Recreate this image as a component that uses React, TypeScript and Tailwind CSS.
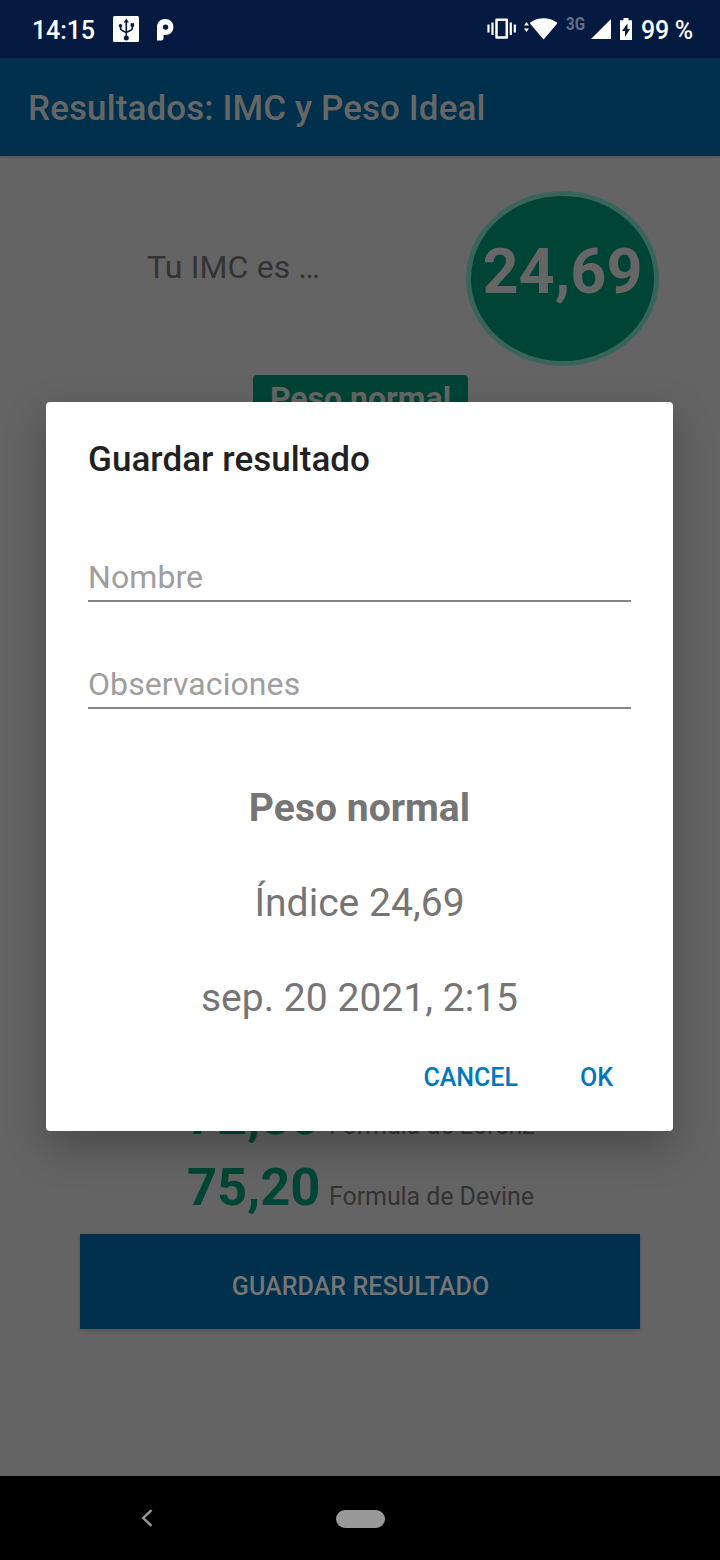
import React from "react";

function StatusBar() {
  return (
    <header className="flex h-[58px] shrink-0 items-center bg-[#051a40] pl-[32px] text-white">
      <span className="w-[81px] pt-[4px] text-[25px] font-medium leading-[56px] tracking-[-0.1px]">14:15</span>
      <svg className="h-[26px] w-[26px]" viewBox="0 0 26 26">
        <rect width="26" height="26" rx="1.5" fill="#fff" />
        <g stroke="#051a40" strokeWidth="1.6" fill="none">
          <path d="M13.3 5v17M7.5 9v3.200q0 1.800 2 2.600l3.800 1.800M19.300 9v3q0 1.800-2 2.600l-4 1.800" />
        </g>
        <g fill="#051a40">
          <path d="M13.300 2.600l2.600 3.800h-5.200z" />
          <circle cx="13.300" cy="22" r="2.500" />
          <circle cx="7.500" cy="9.800" r="1.800" />
          <rect x="17.600" y="7.200" width="3.500" height="3.500" />
        </g>
      </svg>
      <svg className="ml-[18px] mt-px h-[22px] w-[17px]" viewBox="0 0 17 22">
        <path
          fill="#fff"
          fillRule="evenodd"
          d="M8.300 0C13 0 16.400 3.200 16.400 8c0 4.700-3.400 8-8 8H6.500v3.500q0 2-2 2H0V8c0-4.800 3.500-8 8.300-8zM8.600 5.400a2.700 2.700 0 1 0 0 5.400 2.700 2.700 0 0 0 0-5.400z"
        />
      </svg>
      <div className="flex-1" />
      <svg className="h-[22px] w-[30px]" viewBox="0 0 30 22">
        <path d="M9.500 1.800h10.300v17.600H9.500z" fill="none" stroke="#fff" strokeWidth="2.500" strokeLinejoin="round" />
        <path d="M1.500 6.500v8M5.500 4.500v12.500M23.800 4.500v12.500M27.800 6.500v8" stroke="#fff" strokeWidth="2.200" />
      </svg>
      <svg className="ml-[7px] h-[22px] w-[34px]" viewBox="0 0 34 22">
        <path fill="#fff" d="M6.200 4.500C10 1.800 14.500.3 19.500.3S29.200 1.800 33 4.500v1.200L19.600 21.500 6.200 5.700zM2.500 4L5 7.500H0zM2.500 14L5 10.500H0z" />
      </svg>
      <span className="ml-[8px] mt-[-11px] w-[19px] origin-left scale-x-[0.86] text-[17.5px] font-bold leading-[20px] text-[#626f88]">3G</span>
      <svg className="ml-[6px] h-[20px] w-[20px]" viewBox="0 0 20 20">
        <path fill="#fff" d="M20 0v20H0z" />
      </svg>
      <svg className="ml-[9px] h-[22px] w-[12px]" viewBox="0 0 12 22">
        <path fill="#fff" fillRule="evenodd" d="M3.500 0h5v2.200H12V22H0V2.200h3.500zM7.500 5.500L2 13h3v6l5-8H7.500z" />
      </svg>
      <span className="ml-[9px] mr-[27px] whitespace-nowrap pt-[4px] text-[25px] font-medium leading-[56px] tracking-[-0.25px]">99 %</span>
    </header>
  );
}

function Formula({ value, name }: { value: string; name: string }) {
  return (
    <div className="flex h-[71px] items-baseline pl-[187px]">
      <span className="w-[142px] text-[52.5px] font-bold leading-[71px] text-[#004535]">{value}</span>
      <span className="text-[25px] leading-none tracking-[-0.08px] text-[#333333]">{name}</span>
    </div>
  );
}

function Field({ label }: { label: string }) {
  return (
    <div className="h-[55px] border-b-2 border-[#858585] text-[32px] leading-[60px] tracking-[0.08px] text-[#9e9e9e]">
      {label}
    </div>
  );
}

function SaveDialog() {
  return (
    <div
      role="dialog"
      className="absolute left-[46px] top-[402px] flex h-[729px] w-[627px] flex-col rounded-[4px] bg-white px-[42px] shadow-[0_16px_40px_rgba(0,0,0,0.26)]"
    >
      <h2 className="mt-[38px] text-[35px] font-medium leading-[40px] tracking-[0.05px] text-[#212121]">Guardar resultado</h2>
      <div className="mt-[67px] flex flex-col gap-[52px]">
        <Field label="Nombre" />
        <Field label="Observaciones" />
      </div>
      <div className="mt-[52px] text-center text-[39px] leading-[95px] tracking-[0.04px] text-[#757575]">
        <p className="font-bold">Peso normal</p>
        <p>Índice 24,69</p>
        <p>sep. 20 2021, 2:15</p>
      </div>
      <div className="flex justify-end gap-[62px] pr-[18px] pt-[12px] text-[25px] font-medium leading-[40px] text-[#0277bd]">
        <button>CANCEL</button>
        <button>OK</button>
      </div>
    </div>
  );
}

export default function App() {
  return (
    <div className="relative flex h-[1560px] w-[720px] flex-col overflow-hidden bg-[#646464] font-['Roboto',sans-serif]">
      <StatusBar />
      <div className="z-0 h-[98px] shrink-0 bg-[#00304c] pl-[28px] pt-[2px] text-[35px] font-medium leading-[98px] tracking-[0.1px] text-[#666666] shadow-[0_1px_3px_rgba(0,0,0,0.2)]">
        Resultados: IMC y Peso Ideal
      </div>
      <main className="flex flex-1 flex-col">
        <section className="mt-[35px] flex h-[175px] pl-[147px]">
          <p className="w-[319px] pt-[56px] text-[32px] leading-[40px] tracking-[0.15px] text-[#333333]">Tu IMC es …</p>
          <div className="h-[175px] w-[193px] rounded-[50%] border-[5px] border-[#386459] bg-[#004435] text-center text-[63px] font-bold leading-[151px] text-[#666666]">
            24,69
          </div>
        </section>
        <div className="ml-[253px] mt-[9px] h-[48px] w-[215px] rounded-[4px] bg-[#004435] text-center text-[32px] font-bold leading-[47px] text-[#666666]">
          Peso normal
        </div>
        <section className="mt-[658px]">
          <Formula value="72,80" name="Formula de Lorenz" />
          <Formula value="75,20" name="Formula de Devine" />
        </section>
        <button className="ml-[80px] mt-[11px] h-[95px] w-[560px] bg-[#00304c] pl-px pt-[11px] text-[25px] font-medium leading-[84px] tracking-[0.08px] text-[#757575] shadow-[0_1px_4px_rgba(0,0,0,0.18)]">
          GUARDAR RESULTADO
        </button>
      </main>
      <footer className="flex h-[84px] shrink-0 items-center bg-black">
        <svg className="ml-[141px] h-[18px] w-[12px]" viewBox="0 0 12 18">
          <path d="M10.500 1.200L2.200 9l8.300 7.800" fill="none" stroke="#999" strokeWidth="2.400" />
        </svg>
        <div className="ml-[183px] mt-px h-[18px] w-[49px] rounded-full bg-[#999999]" />
      </footer>
      <SaveDialog />
    </div>
  );
}
